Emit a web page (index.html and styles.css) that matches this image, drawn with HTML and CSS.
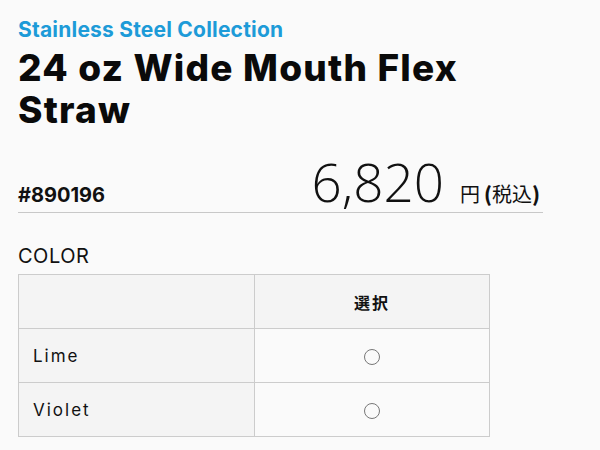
FILE: index.html
```html
<!DOCTYPE html>
<html lang="ja">
<head>
<meta charset="utf-8">
<link rel="stylesheet" href="styles.css">
</head>
<body>
<div class="page">
  <div class="product">
    <p class="series">Stainless Steel Collection</p>
    <h1 class="title">24 oz Wide Mouth Flex Straw</h1>
    <div class="meta">
      <span class="sku">#890196</span>
      <span class="price"><span class="amount">6,820</span><span class="yen">円</span><span class="tax"><b>(</b>税込<b>)</b></span></span>
    </div>
    <h2 class="label">COLOR</h2>
    <table class="options">
      <thead>
        <tr><th class="name-col"></th><th class="pick-col">選択</th></tr>
      </thead>
      <tbody>
        <tr><td class="name">Lime</td><td class="pick"><span class="radio"></span></td></tr>
        <tr><td class="name">Violet</td><td class="pick"><span class="radio"></span></td></tr>
      </tbody>
    </table>
  </div>
</div>
</body>
</html>
```
FILE: styles.css
```css
html, body {
  margin: 0;
  padding: 0;
  background: #fafafa;
}
body {
  font-family: Inter, "Noto Sans CJK JP", sans-serif;
  color: #111;
}
.page {
  width: 585px;
  height: 450px;
  background: #fafafa;
}
.product {
  padding: 17px 0 0 18px;
  width: 525px;
}
.series {
  margin: 0;
  font-size: 21px;
  line-height: 26px;
  font-weight: 700;
  letter-spacing: 0.2px;
  color: #1d9bd8;
}
.title {
  margin: 4px 0 0;
  width: 470px;
  font-size: 37px;
  line-height: 42px;
  font-weight: 800;
  color: #0a0a0a;
  letter-spacing: 1.2px;
}
.meta {
  margin-top: 25px;
  display: flex;
  justify-content: space-between;
  align-items: baseline;
  border-bottom: 1px solid #c8c8c8;
  padding-bottom: 4px;
}
.sku {
  font-size: 20px;
  font-weight: 700;
  color: #111;
}
.price {
  display: flex;
  align-items: baseline;
  margin-right: 3px;
}
.amount {
  font-family: "Open Sans", sans-serif;
  font-weight: 300;
  font-size: 53px;
  line-height: 52px;
  margin-right: 16px;
  color: #111;
}
.yen, .tax {
  font-family: "Noto Sans CJK JP", sans-serif;
  font-size: 20px;
  font-weight: 400;
}
.tax { margin-left: 4px; }
.tax b { font-weight: 900; }
.label {
  margin: 31px 0 6px;
  font-size: 20px;
  font-weight: 400;
  line-height: 24px;
  letter-spacing: 0.5px;
  color: #111;
}
.options {
  border-collapse: collapse;
  width: 472px;
}
.options th, .options td {
  border: 1px solid #cccccc;
  height: 53px;
  padding: 0;
}
.options thead th {
  background: #f4f4f4;
  font-family: "Noto Sans CJK JP", sans-serif;
  font-size: 16px;
  letter-spacing: 2px;
  font-weight: 700;
}
.name-col { width: 235px; }
.options td.name {
  background: #f4f4f4;
  padding-left: 14px;
  font-size: 17px;
  letter-spacing: 2px;
  color: #111;
}
.options td.pick {
  background: #fafafa;
  text-align: center;
}
.radio {
  display: inline-block;
  width: 14px;
  height: 14px;
  border: 1.4px solid #777;
  border-radius: 50%;
  vertical-align: middle;
}
```
